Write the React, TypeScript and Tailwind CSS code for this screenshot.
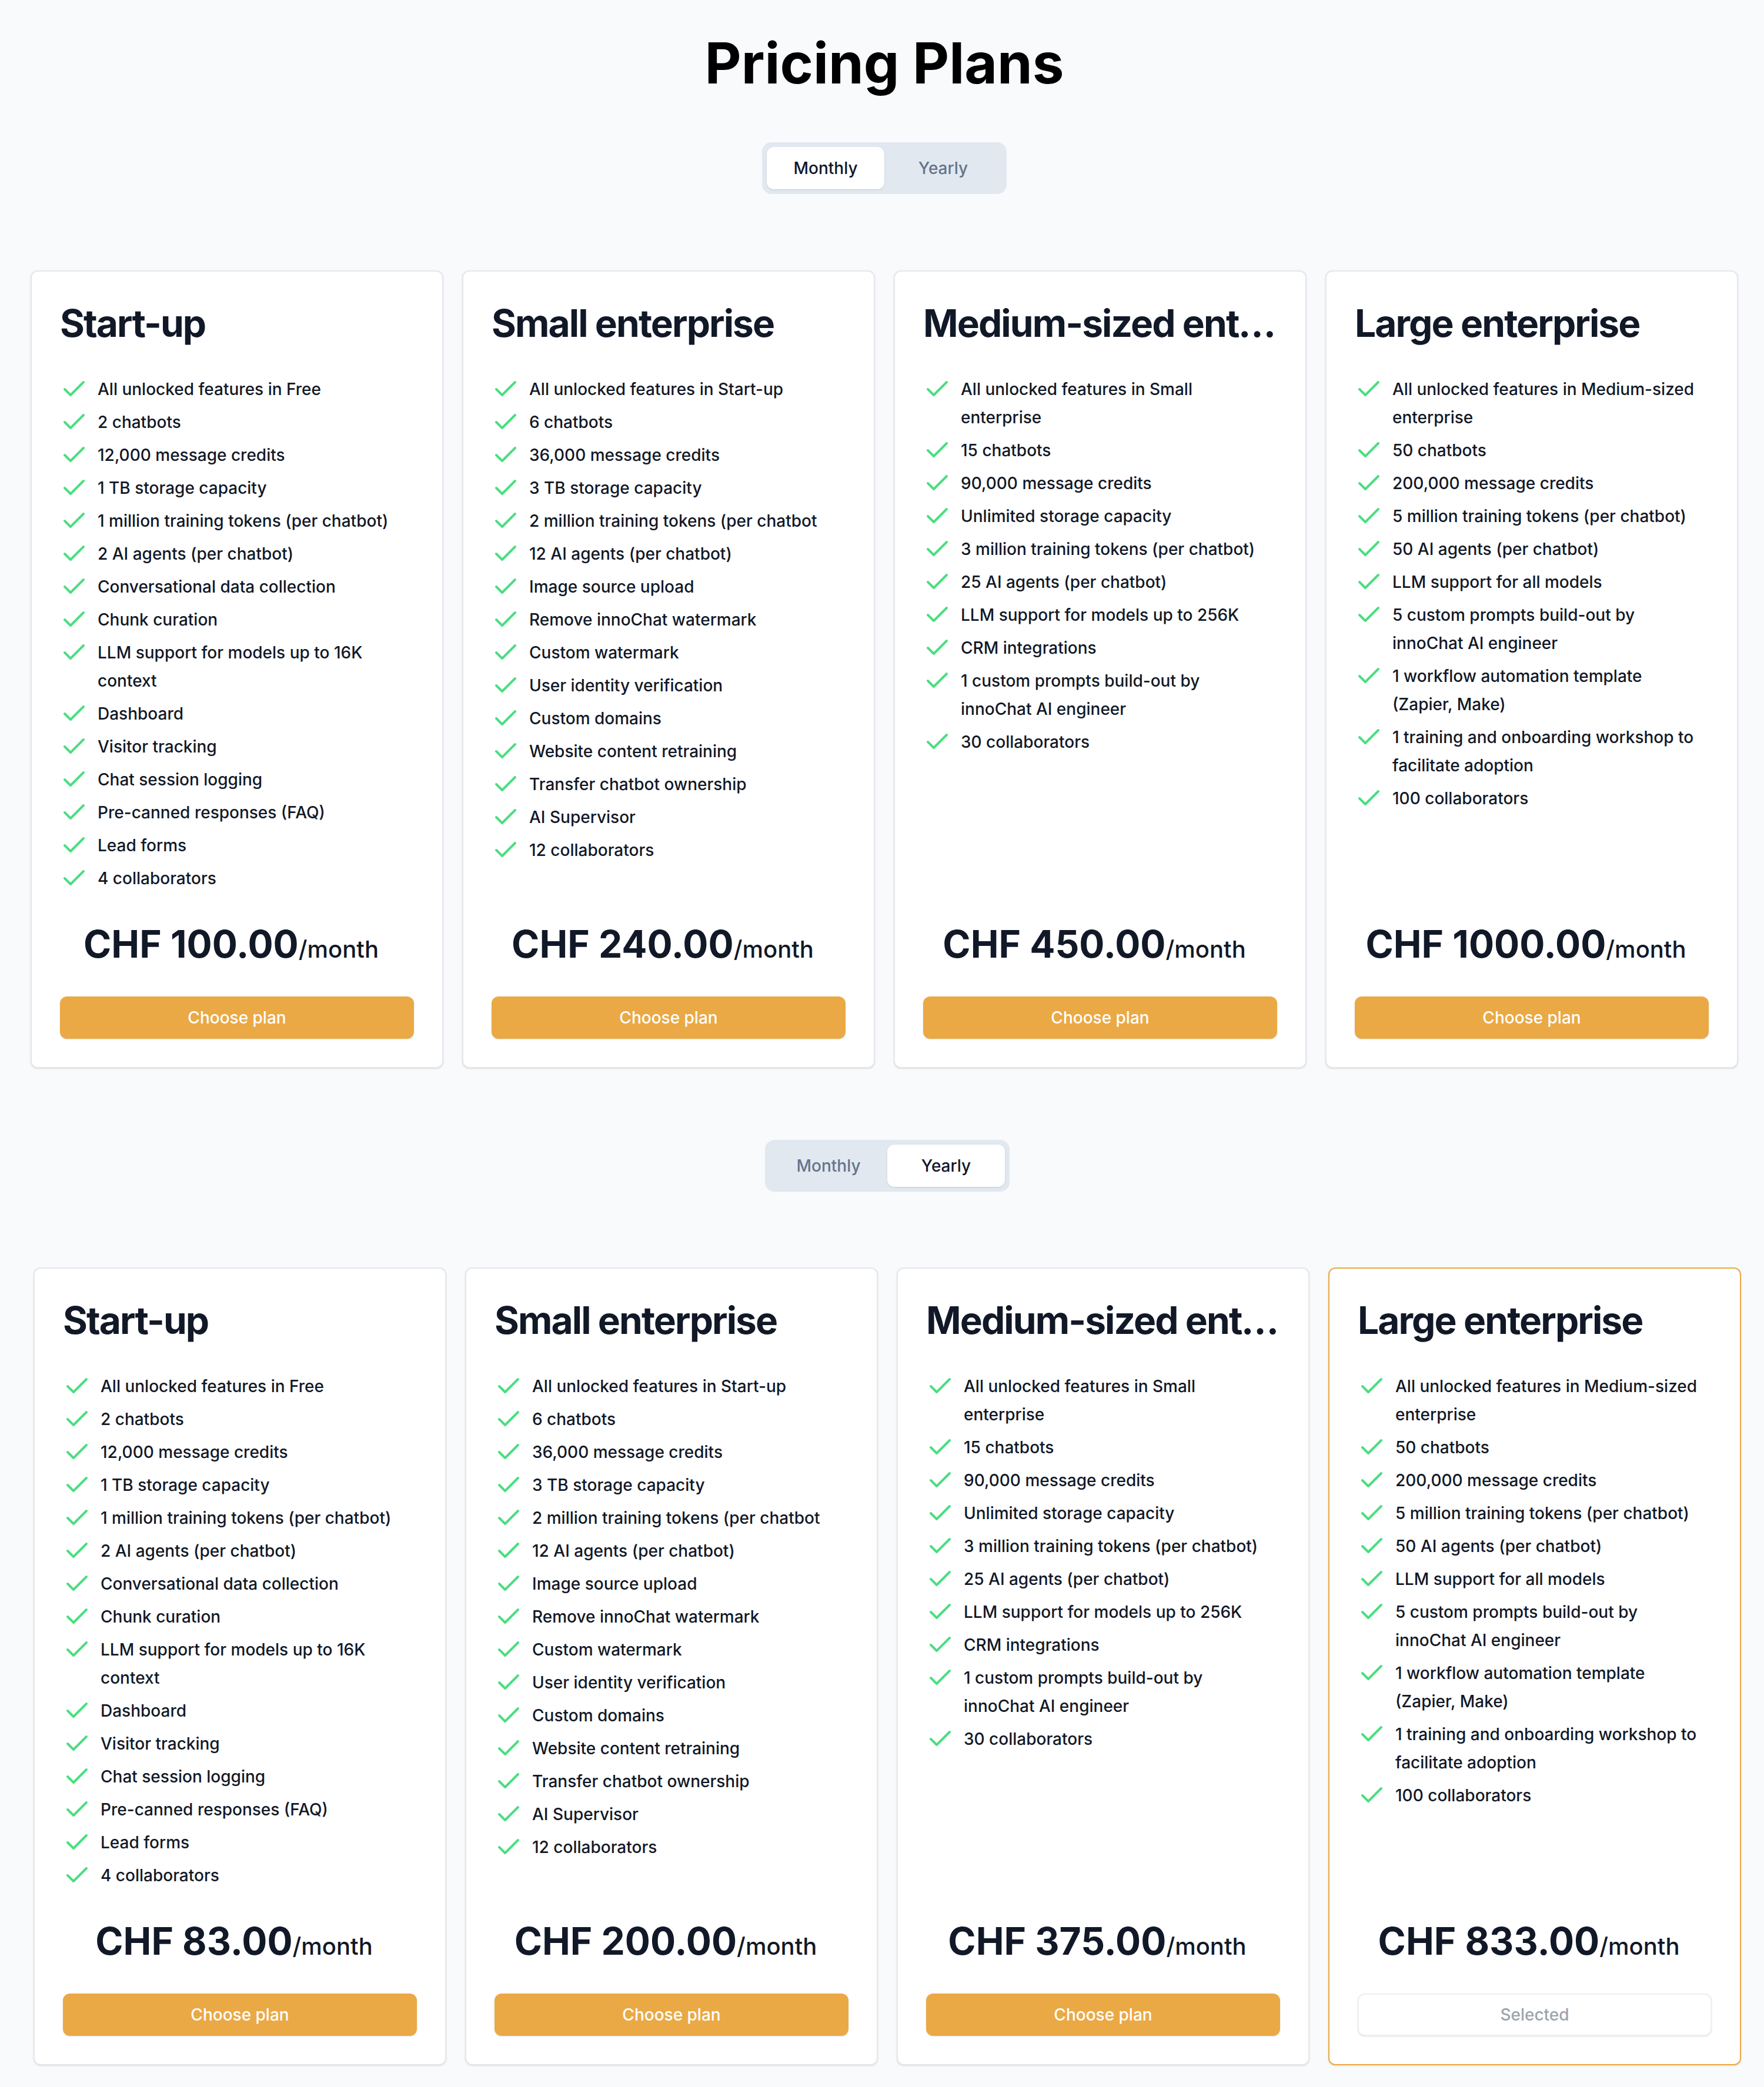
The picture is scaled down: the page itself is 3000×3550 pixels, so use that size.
import { Check } from 'lucide-react';

type Plan = {
  name: string;
  features: string[];
  monthly: string;
  yearly: string;
};

const plans: Plan[] = [
  {
    name: 'Start-up',
    monthly: '100.00',
    yearly: '83.00',
    features: [
      'All unlocked features in Free',
      '2 chatbots',
      '12,000 message credits',
      '1 TB storage capacity',
      '1 million training tokens (per chatbot)',
      '2 AI agents (per chatbot)',
      'Conversational data collection',
      'Chunk curation',
      'LLM support for models up to 16K context',
      'Dashboard',
      'Visitor tracking',
      'Chat session logging',
      'Pre-canned responses (FAQ)',
      'Lead forms',
      '4 collaborators',
    ],
  },
  {
    name: 'Small enterprise',
    monthly: '240.00',
    yearly: '200.00',
    features: [
      'All unlocked features in Start-up',
      '6 chatbots',
      '36,000 message credits',
      '3 TB storage capacity',
      '2 million training tokens (per chatbot',
      '12 AI agents (per chatbot)',
      'Image source upload',
      'Remove innoChat watermark',
      'Custom watermark',
      'User identity verification',
      'Custom domains',
      'Website content retraining',
      'Transfer chatbot ownership',
      'AI Supervisor',
      '12 collaborators',
    ],
  },
  {
    name: 'Medium-sized enterprise',
    monthly: '450.00',
    yearly: '375.00',
    features: [
      'All unlocked features in Small enterprise',
      '15 chatbots',
      '90,000 message credits',
      'Unlimited storage capacity',
      '3 million training tokens (per chatbot)',
      '25 AI agents (per chatbot)',
      'LLM support for models up to 256K',
      'CRM integrations',
      '1 custom prompts build-out by innoChat AI engineer',
      '30 collaborators',
    ],
  },
  {
    name: 'Large enterprise',
    monthly: '1000.00',
    yearly: '833.00',
    features: [
      'All unlocked features in Medium-sized enterprise',
      '50 chatbots',
      '200,000 message credits',
      '5 million training tokens (per chatbot)',
      '50 AI agents (per chatbot)',
      'LLM support for all models',
      '5 custom prompts build-out by innoChat AI engineer',
      '1 workflow automation template (Zapier, Make)',
      '1 training and onboarding workshop to facilitate adoption',
      '100 collaborators',
    ],
  },
];

function Toggle({ yearly }: { yearly: boolean }) {
  const active = 'bg-white text-[#0f172a] shadow-sm';
  const idle = 'text-[#64748b]';
  return (
    <div className="inline-flex rounded-[16px] bg-[#e2e8f0] p-2">
      <button className={`h-[72px] w-[200px] rounded-[12px] text-[28px] font-medium ${yearly ? idle : active}`}>
        Monthly
      </button>
      <button className={`h-[72px] w-[200px] rounded-[12px] text-[28px] font-medium ${yearly ? active : idle}`}>
        Yearly
      </button>
    </div>
  );
}

function PlanCard({ plan, yearly, selected }: { plan: Plan; yearly: boolean; selected: boolean }) {
  return (
    <div
      className={`flex flex-col rounded-[12px] border-2 bg-white p-12 shadow-sm ${
        selected ? 'border-[#eaa945]' : 'border-[#e5e7eb]'
      }`}
    >
      <h2 className="truncate text-[64px] font-bold leading-[80px] tracking-[-0.03em] text-[#111827]">
        {plan.name}
      </h2>

      <ul className="mt-12 flex flex-1 flex-col gap-2 pr-[14px]">
        {plan.features.map((f) => (
          <li key={f} className="flex items-start gap-4">
            <Check className="h-12 w-12 shrink-0 text-[#4ade80]" strokeWidth={2} />
            <span className="text-[28px] font-medium leading-[48px] text-[#111827]">{f}</span>
          </li>
        ))}
      </ul>

      <p className="mt-12 pr-[20px] text-center text-[64px] font-bold leading-[80px] text-[#111827]">
        CHF {yearly ? plan.yearly : plan.monthly}
        <span className="text-[40px] font-medium">/month</span>
      </p>

      {selected ? (
        <button className="mt-10 h-[72px] w-full rounded-[12px] border-2 border-[#eeeff1] bg-white text-[28px] font-medium text-[#9ca3af] shadow-sm">
          Selected
        </button>
      ) : (
        <button className="mt-10 h-[72px] w-full rounded-[12px] bg-[#eaa945] text-[28px] font-medium text-white shadow-sm">
          Choose plan
        </button>
      )}
    </div>
  );
}

export default function App() {
  return (
    <div className="min-h-screen bg-[#f8fafc] pb-[43px] font-['Inter',sans-serif]">
      <section className="flex flex-col items-center pl-[52px] pr-[44px] pt-[47px]">
        <h1 className="text-[96px] font-bold leading-[120px] text-black">Pricing Plans</h1>
        <div className="mt-[75px]">
          <Toggle yearly={false} />
        </div>
        <div className="mt-[130px] grid w-full grid-cols-4 gap-8">
          {plans.map((p) => (
            <PlanCard key={p.name} plan={p} yearly={false} selected={false} />
          ))}
        </div>
      </section>

      <section className="mt-[122px] flex flex-col items-center pl-[57px] pr-[39px]">
        <Toggle yearly />
        <div className="mt-[129px] grid w-full grid-cols-4 gap-8">
          {plans.map((p, i) => (
            <PlanCard key={p.name} plan={p} yearly selected={i === 3} />
          ))}
        </div>
      </section>
    </div>
  );
}
